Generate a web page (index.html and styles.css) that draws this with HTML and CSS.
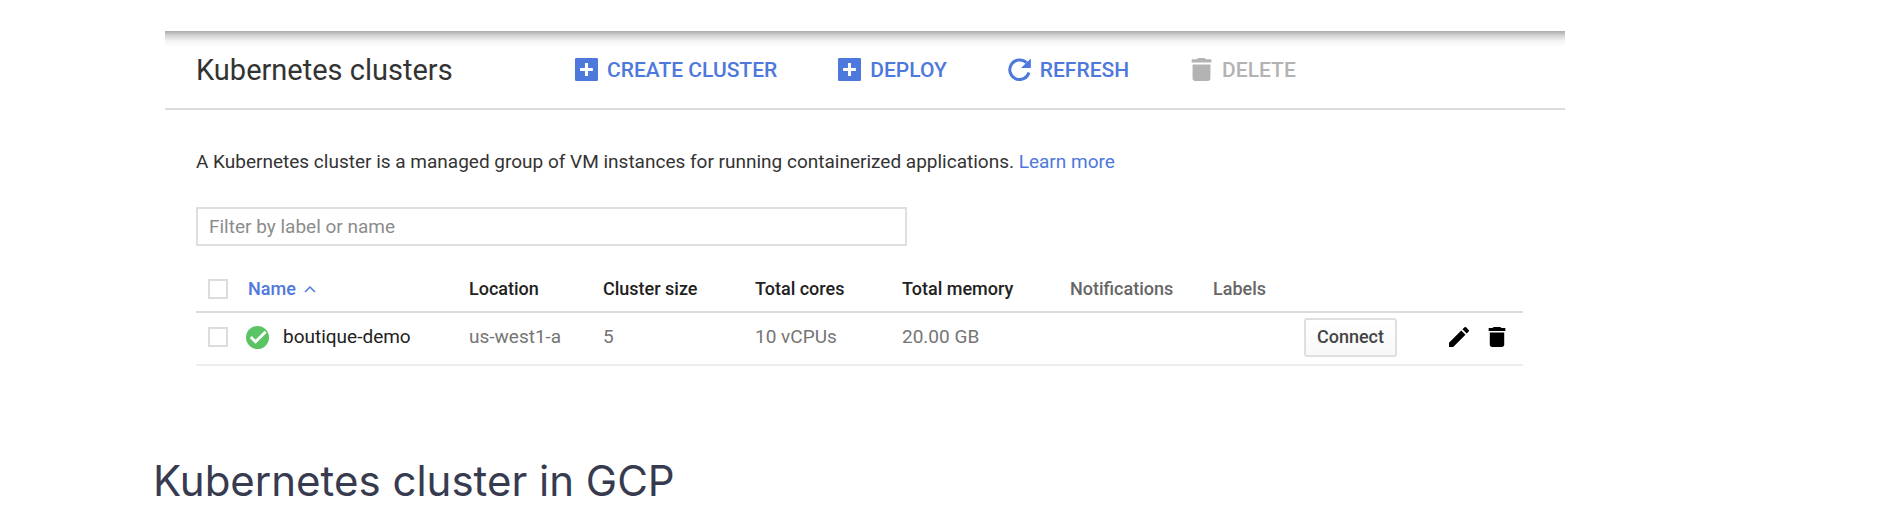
FILE: index.html
```html
<!DOCTYPE html>
<html lang="en">
<head>
<meta charset="utf-8">
<meta name="viewport" content="width=device-width, initial-scale=1">
<title>Kubernetes clusters</title>
<link rel="stylesheet" href="styles.css">
</head>
<body>
<main class="page">
  <section class="console">
    <header class="toolbar">
      <h1 class="toolbar-title">Kubernetes clusters</h1>
      <div class="toolbar-actions">
        <button class="action" type="button">
          <svg class="action-icon" viewBox="3 3 18 18" aria-hidden="true"><path fill="currentColor" fill-rule="evenodd" d="M4 3h16a1 1 0 0 1 1 1v16a1 1 0 0 1-1 1H4a1 1 0 0 1-1-1V4a1 1 0 0 1 1-1zm6.800 4v3.800H7v2.400h3.800V17h2.400v-3.800H17v-2.400h-3.800V7z"/></svg>
          Create cluster
        </button>
        <button class="action" type="button">
          <svg class="action-icon" viewBox="3 3 18 18" aria-hidden="true"><path fill="currentColor" fill-rule="evenodd" d="M4 3h16a1 1 0 0 1 1 1v16a1 1 0 0 1-1 1H4a1 1 0 0 1-1-1V4a1 1 0 0 1 1-1zm6.800 4v3.800H7v2.400h3.800V17h2.400v-3.800H17v-2.400h-3.800V7z"/></svg>
          Deploy
        </button>
        <button class="action" type="button">
          <svg class="action-icon" viewBox="0 0 23 23" aria-hidden="true"><path d="M21 14.500A9.800 9.800 0 1 1 18.500 4.800" fill="none" stroke="currentColor" stroke-width="3"/><path fill="currentColor" d="M22.800.5V10H13z"/></svg>
          Refresh
        </button>
        <button class="action" type="button" disabled>
          <svg class="action-icon" viewBox="3 3 18 18" aria-hidden="true"><path fill="currentColor" d="M5 19c0 1.100.9 2 2 2h10c1.100 0 2-.9 2-2V8H5zM19.700 4h-4.200L14.500 3h-5l-1 1H4.300v2.500h15.400z"/></svg>
          Delete
        </button>
      </div>
    </header>
    <div class="content">
      <p class="intro">A Kubernetes cluster is a managed group of VM instances for running containerized applications. <a class="link" href="#">Learn more</a></p>
      <input class="filter" type="text" placeholder="Filter by label or name" aria-label="Filter by label or name">
      <table class="clusters">
        <colgroup>
          <col class="col-check"><col class="col-name"><col class="col-location"><col class="col-size"><col class="col-cores"><col class="col-memory"><col class="col-notifications"><col class="col-labels"><col class="col-tools">
        </colgroup>
        <thead>
          <tr>
            <th class="check-cell"><input class="check" type="checkbox" aria-label="Select all clusters"></th>
            <th><button class="sort" type="button">Name <svg class="sort-icon" viewBox="0 0 12 8" aria-hidden="true"><path d="M1 7l5-5 5 5" fill="none" stroke="currentColor" stroke-width="1.500"/></svg></button></th>
            <th>Location</th>
            <th>Cluster size</th>
            <th>Total cores</th>
            <th>Total memory</th>
            <th class="muted">Notifications</th>
            <th class="muted">Labels</th>
            <td></td>
          </tr>
        </thead>
        <tbody>
          <tr>
            <td class="check-cell"><input class="check" type="checkbox" aria-label="Select boutique-demo"></td>
            <td><a class="cluster" href="#"><svg class="status" viewBox="0 0 24 24" aria-hidden="true"><circle cx="12" cy="12" r="12" fill="#5ac465"/><path d="M5 11.500l5 5L20.500 6" fill="none" stroke="#fff" stroke-width="3"/></svg>boutique-demo</a></td>
            <td>us-west1-a</td>
            <td>5</td>
            <td>10 vCPUs</td>
            <td>20.00 GB</td>
            <td></td>
            <td></td>
            <td>
              <div class="tools">
                <button class="connect" type="button">Connect</button>
                <button class="tool tool-edit" type="button" aria-label="Edit"><svg class="tool-icon" viewBox="3 3 18 18" aria-hidden="true"><path d="M3 17.250V21h3.750L17.810 9.940l-3.750-3.750zM20.710 7.040a1 1 0 0 0 0-1.410l-2.340-2.340a1 1 0 0 0-1.410 0l-1.830 1.830 3.750 3.750z"/></svg></button>
                <button class="tool" type="button" aria-label="Delete"><svg class="tool-icon" viewBox="3 3 18 18" aria-hidden="true"><path d="M5.500 19c0 1.100.9 2 2 2h9c1.100 0 2-.9 2-2V8h-13zM19.500 4H16l-1-1H9L8 4H4.500v2.500h15z"/></svg></button>
              </div>
            </td>
          </tr>
        </tbody>
      </table>
    </div>
  </section>
  <p class="caption">Kubernetes cluster in GCP</p>
</main>
</body>
</html>
```
FILE: styles.css
```css
* { box-sizing: border-box; }

body {
  margin: 0;
  background: #fff;
  color: #333;
  font-family: Roboto, "Liberation Sans", sans-serif;
  font-size: 19px;
  line-height: 24px;
}

button {
  padding: 0;
  border: 0;
  background: none;
  color: inherit;
  font: inherit;
  white-space: nowrap;
}

.page { padding: 31px 335px 0 153px; }

.console {
  margin-left: 12px;
  background: linear-gradient(#acacac, #d6d6d6 5px, #f3f3f3 10px, #fff 16px) top / 100% 16px no-repeat;
}

.toolbar {
  display: flex;
  align-items: center;
  height: 79px;
  padding: 0 31px;
  border-bottom: 2px solid #dcdcdc;
}

.toolbar-title {
  flex: 0 0 379px;
  margin: 0;
  font-size: 29px;
  font-weight: 400;
  line-height: 36px;
}

.toolbar-actions { display: flex; gap: 61px; }

.action {
  display: flex;
  align-items: center;
  gap: 9px;
  color: #4d78dc;
  font-size: 21px;
  font-weight: 500;
  text-transform: uppercase;
}

.action:disabled { color: #b3b3b3; }

.action-icon { width: 23px; height: 23px; }

.content { padding: 40px 42px 0 31px; }

.intro { margin: 0; }

.link { color: #4d78dc; text-decoration: none; }

.filter {
  display: block;
  width: 711px;
  max-width: 100%;
  height: 39px;
  margin-top: 33px;
  padding: 0 11px;
  border: 2px solid #dfdfdf;
  color: #333;
  font: inherit;
}

.filter::placeholder { color: #8c8c8c; }

.clusters {
  width: 100%;
  margin-top: 20px;
  border-collapse: collapse;
  table-layout: fixed;
}

.col-check { width: 52px; }
.col-name { width: 221px; }
.col-location { width: 134px; }
.col-size { width: 152px; }
.col-cores { width: 147px; }
.col-memory { width: 168px; }
.col-notifications { width: 143px; }
.col-labels { width: 92px; }

.clusters th,
.clusters td { padding: 0; text-align: left; white-space: nowrap; }

.clusters th {
  color: #222;
  font-size: 18px;
  font-weight: 500;
}

.clusters .muted { color: #666; }

.clusters thead tr { height: 46px; border-bottom: 2px solid #dcdcdc; }

.clusters tbody tr { height: 53px; border-bottom: 2px solid #eee; }

.clusters tbody td { padding-bottom: 3px; color: #757575; }

.clusters .check-cell { padding-left: 12px; }

.check {
  display: block;
  width: 20px;
  height: 20px;
  margin: 0;
  border: 2px solid #dcdcdc;
  background: #fff;
  appearance: none;
}

.check:checked { background: #4d78dc; }

.sort { display: flex; align-items: center; gap: 8px; color: #4d78dc; }

.sort-icon { width: 12px; height: 8px; }

.cluster {
  display: flex;
  align-items: center;
  gap: 14px;
  margin-left: -2px;
  color: #222;
  text-decoration: none;
}

.status { width: 23px; height: 23px; }

.tools { display: flex; align-items: center; justify-content: flex-end; padding-right: 16px; }

.connect {
  height: 39px;
  padding: 0 11px;
  border: 2px solid #dfdfdf;
  border-radius: 3px;
  background: linear-gradient(#fff, #f8f8f8);
  color: #444;
  font-size: 18px;
  font-weight: 500;
}

.tool { display: flex; color: #000; }

.tool-edit { margin: 0 18px 0 52px; }

.tool-icon { width: 20px; height: 20px; }

.caption {
  margin: 87px 0 0;
  color: #373b50;
  font-family: Inter, "Open Sans", sans-serif;
  font-size: 42px;
  line-height: 56px;
}
```
